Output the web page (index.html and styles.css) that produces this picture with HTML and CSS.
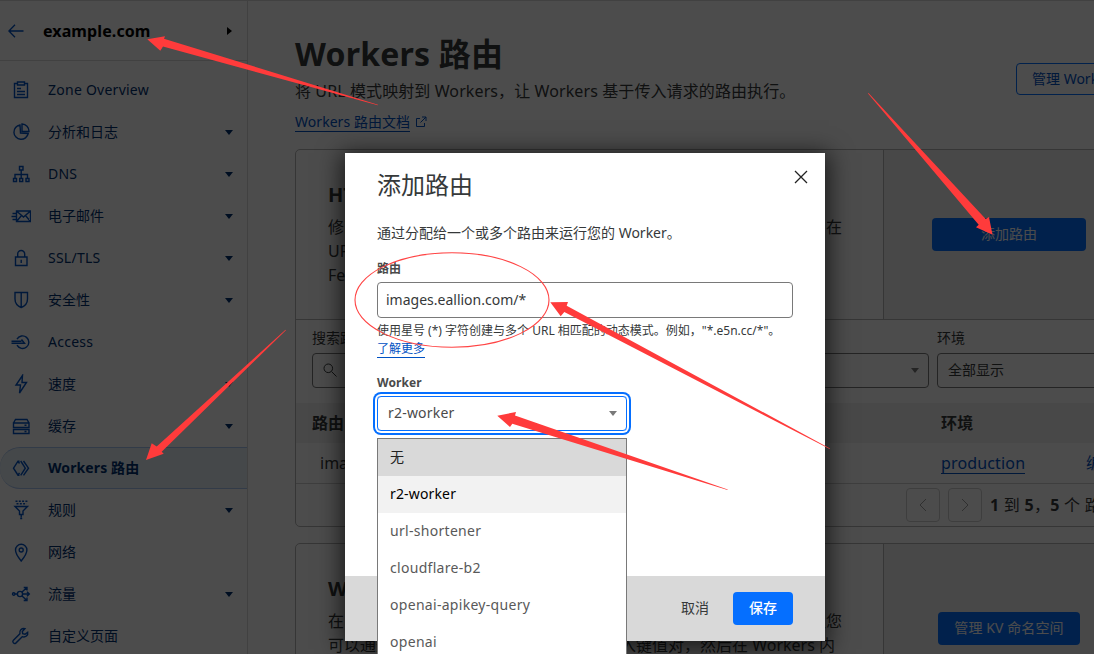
FILE: index.html
```html
<!DOCTYPE html>
<html lang="zh-CN">
<head>
<meta charset="utf-8">
<title>Workers 路由</title>
<link rel="stylesheet" href="styles.css">
</head>
<body>
<div class="app">
  <aside class="sidebar">
    <header class="zone">
      <svg class="back" width="16" height="14" viewBox="0 0 16 14"><path d="M7 .7.9 7 7 13.300M1 7h14.500"/></svg>
      <span class="zone-name">example.com</span>
      <i class="caret-right"></i>
    </header>
    <nav class="nav">
      <a class="item"><svg viewBox="0 0 20 20"><path d="M7 3.500H3.500v14h13v-14H13M6.500 2h7v3h-7zM6 8.500h4M6 11.500h8M6 14.500h8"/></svg><span class="latin">Zone Overview</span></a>
      <a class="item"><svg viewBox="0 0 20 20"><path d="M9 3a7.200 7.200 0 1 0 8.200 8.500L9.500 11zM11 2v7.500h7A7.300 7.300 0 0 0 11 2z" fill="none"/></svg><span>分析和日志</span><i class="caret"></i></a>
      <a class="item"><svg viewBox="0 0 20 20"><path d="M8.500 2.500h3.500v3.500H8.500zM2.500 14.500h3v3h-3zM8.700 14.500h3v3h-3zM15 14.500h3v3h-3zM10.200 6v8.500M4 14.500v-4h12.500v4"/></svg><span class="latin">DNS</span><i class="caret"></i></a>
      <a class="item"><svg viewBox="0 0 20 20"><path d="M5.500 5h14v10.500h-14zM5.500 5l7 6 7-6M5.500 15.500l5-6M19.500 15.500l-5-6M1.500 7.500H5M.5 10.500H5M1.500 13.500H5"/></svg><span>电子邮件</span><i class="caret"></i></a>
      <a class="item"><svg viewBox="0 0 20 20"><path d="M4.500 9h11.500v8.500H4.500zM6.700 9V6a3.500 3.500 0 0 1 7 0v3M10.200 12v3M9.500 12.500h1.400"/></svg><span class="latin">SSL/TLS</span><i class="caret"></i></a>
      <a class="item"><svg viewBox="0 0 20 20"><path d="M4 2.500h12.500V9c0 4-2.500 7-6.300 8.500C6.500 16 4 13 4 9zM10.200 2.500v15"/></svg><span>安全性</span><i class="caret"></i></a>
      <a class="item"><svg viewBox="0 0 20 20"><path d="M6 7.200a6.300 6.300 0 1 1 0 6M.5 9.200h10M.5 11.200h13l-3-3.700"/></svg><span class="latin">Access</span></a>
      <a class="item"><svg viewBox="0 0 20 20"><path d="M11.500 1.500l-6.500 9.500h4.500L8.500 19 15.500 8.500h-4.500z"/></svg><span>速度</span><i class="caret"></i></a>
      <a class="item"><svg viewBox="0 0 20 20"><path d="M2.500 7l2-3.500h11.500l2 3.500M2.500 7h15.500v4.500H2.500zM2.500 13.500h15.500v4H2.500zM13.500 9.300h2M13.500 15.500h2"/></svg><span>缓存</span><i class="caret"></i></a>
      <a class="item active"><svg viewBox="0 0 20 20"><path d="M8.500 3.200 7 3.200 2.500 10.200l4.500 7h1.500M7 3.200l1.500 2.300M7 17.200l1.500-2.300M9.700 3l4.600 7.200-4.600 7.200M12.500 3l5 7.200-5 7.200"/></svg><span>Workers 路由</span></a>
      <a class="item"><svg viewBox="0 0 20 20"><path d="M4.500 1.300h12M5.500 3.800h10" stroke-dasharray="2 1.300"/><path d="M4 6.500h12.500L12 11v3.500H8.500V11zM10.200 14.500v3M9.200 18.500h2"/></svg><span>规则</span><i class="caret"></i></a>
      <a class="item"><svg viewBox="0 0 20 20"><path d="M10.200 19C6.500 14.500 4.500 11 4.500 8a5.700 5.700 0 0 1 11.400 0c0 3-2 6.500-5.700 11z"/><circle cx="10.200" cy="8" r="2"/></svg><span>网络</span></a>
      <a class="item"><svg viewBox="0 0 20 20"><circle cx="2.700" cy="10" r="1.200"/><circle cx="9" cy="10" r="2.600"/><path d="M4 10h2.400M11.600 10H18M11 8l4.700-4.300M11 12l4.700 4.300M16 7.700 18.300 10 16 12.300M12.700 3.500h3.300V6.500M12.700 16.500h3.300V13.500"/></svg><span>流量</span><i class="caret"></i></a>
      <a class="item"><svg viewBox="0 0 20 20"><path d="M16.700 6.200l-2.700 2-2.300-.5-.4-2.300 2.600-2.700c-3.200-.7-5.900 1.800-5 5L2.200 14.500c-1.200 1.600.9 3.900 2.600 2.600l6.400-6.400c3.300 1.100 6.200-1.300 5.500-4.500z"/></svg><span>自定义页面</span></a>
    </nav>
  </aside>
  <main class="main">
    <header class="page-head">
      <div>
        <h1>Workers 路由</h1>
        <p class="lead">将 URL 模式映射到 Workers，让 Workers 基于传入请求的路由执行。</p>
        <p class="docs"><a class="link">Workers 路由文档</a><svg width="12" height="12" viewBox="0 0 12 12"><path d="M5 2.500H1.500v8h8V7M7 1h4v4M11 1 5.500 6.500"/></svg></p>
      </div>
      <a class="btn outline">管理 Workers</a>
    </header>
    <section class="card">
      <div class="intro">
        <div class="copy">
          <h2>HTTP 路由</h2>
          <p><span>修改路由</span><span>在</span></p>
          <p><span>URL 模式</span></p>
          <p><span>Fetch 事件</span></p>
        </div>
        <div class="action"><a class="btn wide">添加路由</a></div>
      </div>
      <div class="filters">
        <div class="field grow"><label>搜索路由</label><div class="box"><svg width="14" height="14" viewBox="0 0 14 14"><circle cx="5.300" cy="5.300" r="4.300"/><path d="M8.500 8.500l5 5"/></svg><i class="caret"></i></div></div>
        <div class="field"><label>环境</label><div class="box">全部显示</div></div>
      </div>
      <div class="row head"><span>路由</span><span>环境</span></div>
      <div class="row"><span class="route">images.eallion.com/*</span><span><a class="link">production</a></span><span class="edit">编辑</span></div>
      <div class="pager">
        <a class="page"><svg width="10" height="14" viewBox="0 0 10 14"><path d="M8 1 2 7l6 6"/></svg></a>
        <a class="page"><svg width="10" height="14" viewBox="0 0 10 14"><path d="M2 1l6 6-6 6"/></svg></a>
        <span class="count"><b>1</b> 到 <b>5</b>，<b>5</b> 个 路由</span>
      </div>
    </section>
    <section class="card second">
      <div class="intro">
        <div class="copy">
          <h2>Workers KV</h2>
          <p><span>在 Workers</span><span>让您</span></p>
          <p><span>可以通过</span><span class="tail">写入键值对，然后在 Workers 内</span></p>
        </div>
        <div class="action"><a class="btn kv">管理 KV 命名空间</a></div>
      </div>
    </section>
  </main>
</div>
<div class="backdrop"></div>
<div class="modal">
  <div class="modal-body">
    <header class="modal-head"><h3>添加路由</h3><svg width="14" height="14" viewBox="0 0 14 14"><path d="M1 1l12 12M13 1 1 13"/></svg></header>
    <p class="text">通过分配给一个或多个路由来运行您的 Worker。</p>
    <label class="label">路由</label>
    <div class="input">images.eallion.com/*</div>
    <p class="help">使用星号 (*) 字符创建与多个 URL 相匹配的动态模式。例如，"*.e5n.cc/*"。</p>
    <p class="help more"><a class="link">了解更多</a></p>
    <label class="label worker">Worker</label>
    <div class="select"><span>r2-worker</span><i class="caret"></i>
      <ul class="menu">
        <li class="hover">无</li><li class="selected">r2-worker</li><li>url-shortener</li><li>cloudflare-b2</li><li>openai-apikey-query</li><li>openai</li>
      </ul>
    </div>
  </div>
  <footer class="modal-foot"><a class="cancel">取消</a><a class="btn save">保存</a></footer>
</div>
<svg class="marks" width="1094" height="654" viewBox="0 0 1094 654">
  <path d="M147.300 39.300 165 36.300 164 38.700 378 104.700 377.800 105.300 163 46.500 160.300 50.700zM146 460l5.700-16.700 5 3.200L285.500 329.800l.4.400L161.700 451.700l2 2zM992.500 234.700 989 217l-3.300 2L868.500 93 868 93.400l110.700 131.300-2.700 2.600zM550.300 302.300l17.700-.3-1.300 3.700 263.300 142.800-.3.600L564.300 312l-3.600 4.300zM497.300 415.700 516 412l-1 3.500 212.700 74-.2.600L512.300 423.700l-2.300 3.300z"/>
  <ellipse cx="452" cy="300" rx="97" ry="47.200"/>
</svg>
</body>
</html>
```
FILE: styles.css
```css
* { box-sizing: border-box; margin: 0; padding: 0; }
body { width: 1094px; height: 654px; overflow: hidden; position: relative; background: #fff; color: #36393a; font: 14px/20px "Noto Sans", "Noto Sans CJK SC", sans-serif; white-space: nowrap; }
svg { fill: none; stroke: currentColor; flex: none; }
i { display: block; flex: none; }
.app { display: flex; height: 654px; overflow: hidden; border-top: 1px solid #d9d9d9; }
.sidebar { width: 248px; flex: none; border-right: 1px solid #d9d9d9; }
.zone { height: 60px; display: flex; align-items: center; padding: 0 15px 0 8px; border-bottom: 1px solid #d9d9d9; }
.back { color: #0051c3; stroke-width: 1.3; }
.zone-name { flex: 1; margin-left: 19px; font-size: 16px; font-weight: 700; color: #000; letter-spacing: .1px; }
.caret-right { border: 4.500px solid transparent; border-left: 5px solid #000; border-right: 0; }
.nav { padding-top: 8px; }
.item { height: 42px; display: flex; align-items: center; padding: 0 14px 0 11px; color: #003070; border: 1px solid transparent; border-width: 1px 0; }
.item svg { width: 20px; height: 20px; margin-right: 17px; color: #0051c3; stroke-width: 1.4; }
.item span { flex: 1; }
.item .latin { letter-spacing: .25px; padding-bottom: 1px; }
.caret { border: 4.500px solid transparent; border-top: 5px solid currentColor; border-bottom: 0; }
.active { background: #e6f1f7; border-color: #a9c5f0; border-radius: 20px 0 0 20px; font-weight: 700; letter-spacing: .1px; }
.main { padding: 33px 0 0 47px; flex: none; width: 887px; }
.page-head { display: flex; justify-content: space-between; align-items: flex-start; height: 115px; }
h1 { font-size: 32px; line-height: 40px; letter-spacing: .2px; }
.lead { font-size: 16px; line-height: 24px; margin-top: 5px; letter-spacing: .1px; }
.docs { display: flex; align-items: center; margin-top: 9px; color: #0051c3; height: 20px; letter-spacing: .05px; }
.docs svg { margin-left: 5px; }
.link { color: #0051c3; line-height: 18px; border-bottom: 1px solid #0051c3; }
.btn { display: flex; align-items: center; justify-content: center; height: 33px; padding: 0 16px 1px; background: #056fff; color: #fff; border-radius: 4px; }
.outline { margin-top: 29px; width: 119px; height: 32px; padding: 0 0 0 15px; justify-content: flex-start; background: none; border: 1px solid #056fff; color: #0051c3; overflow: hidden; }
.wide { width: 154px; }
.kv { width: 142px; letter-spacing: .1px; }
.card { width: 840px; height: 378px; border: 1px solid #b6b6b6; border-radius: 5px; }
.intro { display: flex; height: 170px; border-bottom: 1px solid #b6b6b6; }
.copy { flex: 1; padding: 32px 41px 0 32px; font-size: 16px; line-height: 24px; }
.copy h2 { font-size: 20px; line-height: 25px; margin-bottom: 8px; }
.copy p { display: flex; justify-content: space-between; }
.copy .tail { margin-right: 7px; }
.action { width: 251px; border-left: 1px solid #b6b6b6; background: #f2f2f2; display: flex; align-items: center; justify-content: center; }
.filters { display: flex; gap: 8px; height: 83px; padding: 8px 16px 0; }
.field { width: 180px; }
.grow { width: 617px; flex: none; }
.box { margin-top: 5px; height: 35px; border: 1px solid #797979; border-radius: 4px; padding: 0 9px 1px 10px; display: flex; align-items: center; justify-content: space-between; }
.box .caret { color: #797979; }
.row { height: 40px; display: flex; align-items: center; font-size: 16px; padding-left: 16px; }
.row > span:first-child { width: 629px; }
.row .route { padding-left: 8px; }
.row > span:nth-child(2) { width: 145px; letter-spacing: .15px; }
.row .link { line-height: 20px; display: inline-block; }
.edit { color: #0051c3; }
.head { background: #f0f0f0; font-weight: 700; }
.pager { border-top: 1px solid #d0d0d0; height: 43px; display: flex; align-items: center; padding-left: 610px; gap: 8px; }
.page { width: 34px; height: 34px; display: grid; place-items: center; border: 1px solid #d0d0d0; border-radius: 4px; color: #a0a0a0; }
.count { font-size: 16px; letter-spacing: .25px; }
.second { margin-top: 16px; height: 200px; }
.backdrop { position: absolute; inset: 0; background: rgba(0,0,0,.7); }
.modal { position: absolute; left: 345px; top: 153px; width: 480px; height: 488px; background: #fff; box-shadow: 0 4px 22px 4px rgba(0,0,0,.65); display: flex; flex-direction: column; }
.modal-body { height: 423px; padding: 16px 32px 0; }
.modal-head { display: flex; justify-content: space-between; }
.modal-head h3 { font-size: 24px; line-height: 32px; font-weight: 400; }
.modal-head svg { margin: 1px -15px 0 0; color: #222; stroke-width: 1.3; }
.text { margin-top: 22px; }
.label { display: block; margin-top: 18px; font-size: 12px; line-height: 16px; font-weight: 700; color: #4a4a4a; }
.input { margin-top: 5px; height: 36px; border: 1px solid #797979; border-radius: 4px; padding: 0 8px; line-height: 34px; }
.help { font-size: 12px; line-height: 18px; margin-top: 4px; }
.help.more { margin-top: 0; }
.help .link { display: inline-block; line-height: 17px; }
.worker { margin-top: 17px; letter-spacing: .1px; }
.select { position: relative; margin-top: 5px; width: 250px; height: 35px; border: 1px solid #056fff; border-radius: 4px; box-shadow: 0 0 0 2px #fff, 0 0 0 4px #056fff; display: flex; align-items: center; justify-content: space-between; padding: 0 9px 0 10px; color: #4a4a4a; letter-spacing: .2px; }
.select > span { padding-bottom: 2px; }
.select .caret { color: #797979; }
.menu { position: absolute; left: -1px; top: 41px; width: 250px; height: 216px; overflow: hidden; border: 1px solid #797979; border-bottom: 0; background: #fff; list-style: none; color: #595959; letter-spacing: .3px; }
.menu li { height: 37px; line-height: 35px; padding-left: 12px; }
.menu .hover { background: #d9d9d9; color: #222; }
.menu .selected { background: #f2f2f2; color: #000; letter-spacing: .15px; }
.modal-foot { height: 65px; background: #d9d9d9; padding: 0 32px; display: flex; align-items: center; justify-content: flex-end; gap: 24px; }
.cancel { padding-bottom: 1px; }
.save { font-weight: 500; }
.marks { position: absolute; inset: 0; stroke: none; }
.marks path { fill: #ff3b3b; }
.marks ellipse { stroke: #f44; stroke-width: 1.1; }
```
